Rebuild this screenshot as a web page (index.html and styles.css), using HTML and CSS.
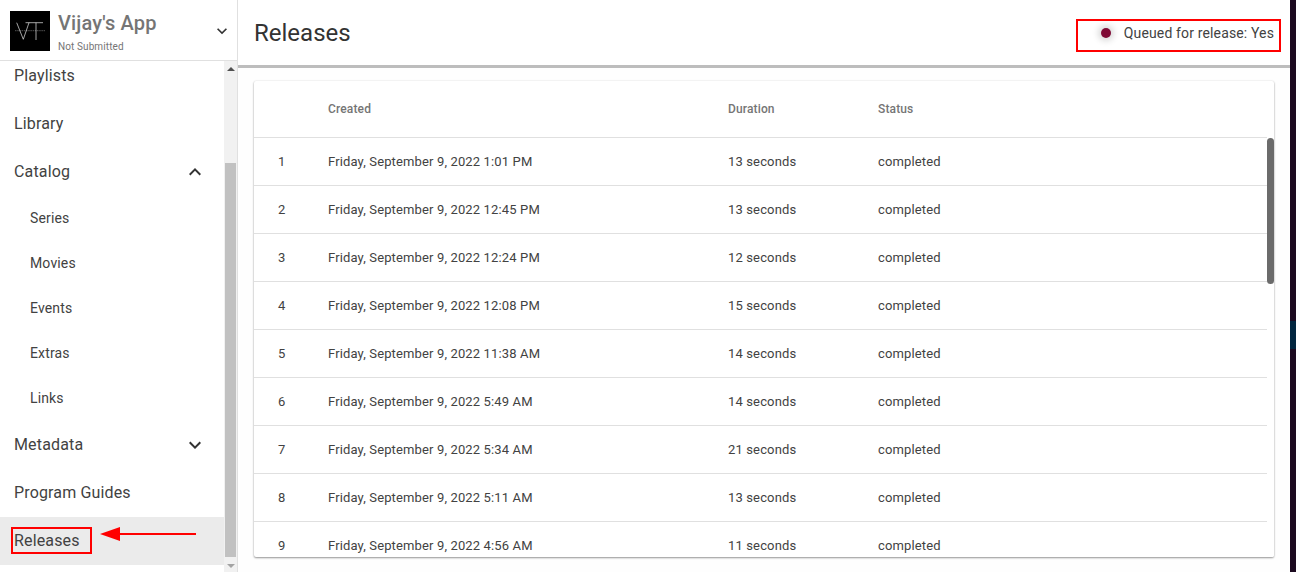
FILE: index.html
```html
<!DOCTYPE html>
<html lang="en">
<head>
<meta charset="utf-8">
<title>Releases</title>
<link rel="stylesheet" href="styles.css">
</head>
<body>
<div class="app">
  <aside class="sidebar">
    <header class="brand">
      <svg class="logo" viewBox="0 0 40 40" aria-hidden="true">
        <rect width="40" height="40" fill="#000"/>
        <path d="M5 19.700 H35" fill="none" stroke="#777" stroke-width="0.700" stroke-dasharray="1.500 .7"/>
        <path d="M6.700 11.700 L13.300 28.300 L19 11.700 M15.500 11.700 H33 M26 11.700 V29" fill="none" stroke="#e8e8e8" stroke-width="0.700"/>
      </svg>
      <div class="brand-text">
        <div class="brand-name">Vijay's App</div>
        <div class="brand-status">Not Submitted</div>
      </div>
      <svg class="chev brand-chev" viewBox="0 0 24 24"><path d="M7.410 8.590 12 13.170l4.590-4.580L18 10l-6 6-6-6z"/></svg>
    </header>
    <div class="nav-wrap">
      <nav class="nav">
        <div class="nav-item">Playlists</div>
        <div class="nav-item">Library</div>
        <div class="nav-item">Catalog
          <svg class="chev" viewBox="0 0 24 24"><path d="M12 8l-6 6 1.410 1.410L12 10.830l4.590 4.580L18 14z"/></svg>
        </div>
        <div class="nav-sub">Series</div>
        <div class="nav-sub">Movies</div>
        <div class="nav-sub">Events</div>
        <div class="nav-sub">Extras</div>
        <div class="nav-sub">Links</div>
        <div class="nav-item">Metadata
          <svg class="chev" viewBox="0 0 24 24"><path d="M7.410 8.590 12 13.170l4.590-4.580L18 10l-6 6-6-6z"/></svg>
        </div>
        <div class="nav-item">Program Guides</div>
        <div class="nav-item selected">Releases</div>
      </nav>
      <div class="side-track">
        <span class="arrow-up"></span>
        <span class="side-thumb"></span>
        <span class="arrow-down"></span>
      </div>
    </div>
    <span class="mark mark-releases"></span>
    <svg class="red-arrow" viewBox="0 0 97 16" aria-hidden="true">
      <path d="M0 8 L20 1 V7 H96 V9 H20 V15 Z" fill="#f00"/>
    </svg>
  </aside>
  <main class="main">
    <header class="topbar">
      <h1 class="title">Releases</h1>
      <div class="queue">
        <span class="dot"></span>
        <span class="queue-text">Queued for release: Yes</span>
      </div>
    </header>
    <section class="content">
      <div class="card">
        <table class="table">
          <thead>
            <tr><th class="c-num"></th><th class="c-created">Created</th><th class="c-dur">Duration</th><th>Status</th></tr>
          </thead>
          <tbody>
            <tr><td>1</td><td>Friday, September 9, 2022 1:01 PM</td><td>13 seconds</td><td>completed</td></tr>
            <tr><td>2</td><td>Friday, September 9, 2022 12:45 PM</td><td>13 seconds</td><td>completed</td></tr>
            <tr><td>3</td><td>Friday, September 9, 2022 12:24 PM</td><td>12 seconds</td><td>completed</td></tr>
            <tr><td>4</td><td>Friday, September 9, 2022 12:08 PM</td><td>15 seconds</td><td>completed</td></tr>
            <tr><td>5</td><td>Friday, September 9, 2022 11:38 AM</td><td>14 seconds</td><td>completed</td></tr>
            <tr><td>6</td><td>Friday, September 9, 2022 5:49 AM</td><td>14 seconds</td><td>completed</td></tr>
            <tr><td>7</td><td>Friday, September 9, 2022 5:34 AM</td><td>21 seconds</td><td>completed</td></tr>
            <tr><td>8</td><td>Friday, September 9, 2022 5:11 AM</td><td>13 seconds</td><td>completed</td></tr>
            <tr><td>9</td><td>Friday, September 9, 2022 4:56 AM</td><td>11 seconds</td><td>completed</td></tr>
          </tbody>
        </table>
        <span class="table-thumb"></span>
      </div>
    </section>
  </main>
  <div class="edge"><span class="edge-block"></span></div>
</div>
</body>
</html>
```
FILE: styles.css
```css
* { box-sizing: border-box; }
html, body { margin: 0; height: 100%; overflow: hidden; }
body { font-family: Roboto, "Liberation Sans", sans-serif; background: #fff; color: #424242; }
.app { display: flex; height: 572px; position: relative; }

.sidebar { width: 238px; flex: none; display: flex; flex-direction: column; border-right: 1px solid #e0e0e0; position: relative; }
.brand { height: 61px; flex: none; display: flex; align-items: center; padding: 1px 0 0 10px; border-bottom: 1px solid #e0e0e0; }
.logo { width: 40px; height: 40px; flex: none; }
.brand-text { margin-left: 8px; flex: 1; padding-top: 3px; }
.brand-name { font-size: 20px; font-weight: 500; line-height: 24px; letter-spacing: .15px; color: #757575; }
.brand-status { font-size: 10px; line-height: 14px; margin-top: 5px; letter-spacing: .1px; color: #757575; }
.chev { width: 20px; height: 20px; fill: #333; flex: none; }
.brand-chev { margin-right: 5px; }

.nav-wrap { flex: 1; display: flex; min-height: 0; overflow: hidden; }
.nav { flex: 1; margin-top: -9px; min-width: 0; }
.nav-item { height: 48px; display: flex; align-items: center; justify-content: space-between; padding: 0 24px 2px 14px; font-size: 16px; letter-spacing: .15px; color: #424242; }
.nav-item .chev { width: 24px; height: 24px; margin: 2px -7px 0 0; }
.nav-sub { height: 45px; display: flex; align-items: center; padding: 0 0 2px 30px; font-size: 14px; letter-spacing: .14px; color: #424242; }
.selected { background: #ebebeb; }

.side-track { width: 13px; flex: none; background: #f1f1f1; position: relative; }
.arrow-up, .arrow-down { position: absolute; left: 3px; width: 0; height: 0; border-left: 4px solid transparent; border-right: 4px solid transparent; }
.arrow-up { top: 6px; border-bottom: 4px solid #505050; }
.arrow-down { bottom: 4px; border-top: 4px solid #a3a3a3; }
.side-thumb { position: absolute; left: 1px; right: 1px; top: 102px; bottom: 15px; background: #c1c1c1; }

.mark { position: absolute; border: 2px solid #f00; }
.mark-releases { left: 11px; top: 527px; width: 81px; height: 27px; }
.red-arrow { position: absolute; left: 100px; top: 526px; width: 97px; height: 16px; }

.main { flex: 1; min-width: 0; display: flex; flex-direction: column; }
.topbar { height: 68px; flex: none; display: flex; align-items: flex-start; justify-content: space-between; padding: 19px 9px 0 16px; border-bottom: 3px solid #bdbdbd; }
.title { margin: 1px 0 0; font-size: 24px; line-height: 27px; font-weight: 400; color: #333; }
.queue { width: 205px; height: 33px; display: flex; align-items: center; justify-content: flex-end; padding: 0 5px 6px 0; border: 2px solid #f00; color: #424242; }
.dot { width: 10px; height: 10px; border-radius: 50%; background: #7f0a35; box-shadow: 0 0 6px 3px rgba(0,0,0,.15); margin-right: 13px; }
.queue-text { font-size: 14px; letter-spacing: .14px; white-space: nowrap; }

.content { flex: 1; min-height: 0; padding: 13px 16px 15px 16px; background: #fefefe; }
.card { height: 476px; position: relative; overflow: hidden; background: #fff; box-shadow: 0 1px 2px rgba(0,0,0,.4), 0 0 2px rgba(0,0,0,.1); border-radius: 2px; }
.table { width: 100%; border-collapse: collapse; table-layout: fixed; font-size: 13px; letter-spacing: .14px; color: #424242; }
.table th { height: 56px; padding: 0; text-align: left; font-size: 12px; font-weight: 500; letter-spacing: .14px; color: #757575; border-bottom: 1px solid #e0e0e0; }
.table td { height: 48px; padding: 0; }
.table tbody tr { border-bottom: 1px solid #e0e0e0; }
.table th.c-num { width: 74px; }
.table th.c-created { width: 400px; }
.table th.c-dur { width: 150px; }
.table td:first-child { padding-left: 24px; }
.table-thumb { position: absolute; right: 0; top: 57px; width: 7px; height: 146px; background: #6b6b6b; border-radius: 4px; }
.table tbody { border-right: 7px solid #fff; }

.edge { width: 6px; flex: none; background: #1c0a20; position: relative; }
.edge-block { position: absolute; left: 0; right: 0; top: 321px; height: 28px; background: #02263f; }
```
